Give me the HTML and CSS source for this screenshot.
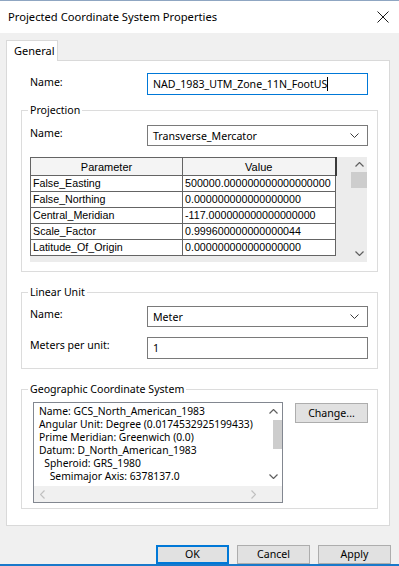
FILE: index.html
```html
<!DOCTYPE html>
<html>
<head>
<meta charset="utf-8">
<title>Projected Coordinate System Properties</title>
<link rel="stylesheet" href="styles.css">
</head>
<body>
<div class="window">
  <div class="titlebar">
    <span class="title">Projected Coordinate System Properties</span>
    <svg class="close" width="12" height="12" viewBox="0 0 12 12"><path d="M0.5 0.5L11.5 11.5M11.5 0.5L0.5 11.5" stroke="#1a1a1a" stroke-width="1"/></svg>
  </div>
  <div class="main">
    <div class="tabs"><div class="tab">General</div></div>
    <div class="panel">
      <div class="row toprow">
        <span class="lbl">Name:</span>
        <div class="textbox focused">NAD_1983_UTM_Zone_11N_FootUS<span class="caret"></span></div>
      </div>

      <fieldset class="group g-proj">
        <legend>Projection</legend>
        <div class="row">
          <span class="lbl">Name:</span>
          <div class="combo"><span>Transverse_Mercator</span><svg class="chev" width="9" height="5" viewBox="0 0 9 5"><path d="M0.5 0.5L4.5 4.5L8.5 0.5" fill="none" stroke="#3c3c3c" stroke-width="1"/></svg></div>
        </div>
        <div class="grid">
          <table class="params">
            <colgroup><col class="c1"><col class="c2"></colgroup>
            <thead><tr><th>Parameter</th><th class="last">Value</th></tr></thead>
            <tbody>
              <tr><td>False_Easting</td><td>500000.000000000000000000</td></tr>
              <tr><td>False_Northing</td><td>0.000000000000000000</td></tr>
              <tr><td>Central_Meridian</td><td>-117.000000000000000000</td></tr>
              <tr><td>Scale_Factor</td><td>0.999600000000000044</td></tr>
              <tr><td>Latitude_Of_Origin</td><td>0.000000000000000000</td></tr>
            </tbody>
          </table>
          <div class="vscroll">
            <div class="arrow up"><svg width="9" height="5" viewBox="0 0 9 5"><path d="M0.5 4.5L4.5 0.5L8.5 4.5" fill="none" stroke="#606060" stroke-width="1.2"/></svg></div>
            <div class="thumb"></div>
            <div class="track"></div>
            <div class="arrow down"><svg width="9" height="5" viewBox="0 0 9 5"><path d="M0.5 0.5L4.5 4.5L8.5 0.5" fill="none" stroke="#606060" stroke-width="1.2"/></svg></div>
          </div>
        </div>
      </fieldset>

      <fieldset class="group g-unit">
        <legend>Linear Unit</legend>
        <div class="row">
          <span class="lbl">Name:</span>
          <div class="combo"><span>Meter</span><svg class="chev" width="9" height="5" viewBox="0 0 9 5"><path d="M0.5 0.5L4.5 4.5L8.5 0.5" fill="none" stroke="#3c3c3c" stroke-width="1"/></svg></div>
        </div>
        <div class="row mpu">
          <span class="lbl">Meters per unit:</span>
          <div class="textbox">1</div>
        </div>
      </fieldset>

      <fieldset class="group g-gcs">
        <legend>Geographic Coordinate System</legend>
        <div class="gcs-row">
          <div class="listbox">
            <div class="list-text">Name: GCS_North_American_1983
Angular Unit: Degree (0.0174532925199433)
Prime Meridian: Greenwich (0.0)
Datum: D_North_American_1983
  Spheroid: GRS_1980
    Semimajor Axis: 6378137.0</div>
            <div class="lvscroll">
              <div class="arrow up"><svg width="9" height="5" viewBox="0 0 9 5"><path d="M0.5 4.5L4.5 0.5L8.5 4.5" fill="none" stroke="#606060" stroke-width="1.2"/></svg></div>
              <div class="thumb"></div>
              <div class="track"></div>
              <div class="arrow down"><svg width="9" height="5" viewBox="0 0 9 5"><path d="M0.5 0.5L4.5 4.5L8.5 0.5" fill="none" stroke="#606060" stroke-width="1.2"/></svg></div>
            </div>
            <div class="hscroll">
              <svg width="5" height="9" viewBox="0 0 5 9"><path d="M4.5 0.5L0.5 4.5L4.5 8.5" fill="none" stroke="#c0c0c0" stroke-width="1.2"/></svg>
              <svg width="5" height="9" viewBox="0 0 5 9"><path d="M0.5 0.5L4.5 4.5L0.5 8.5" fill="none" stroke="#c0c0c0" stroke-width="1.2"/></svg>
            </div>
            <div class="corner"></div>
          </div>
          <div class="btn change">Change...</div>
        </div>
      </fieldset>
    </div>
    <div class="footer">
      <div class="btn default">OK</div>
      <div class="btn">Cancel</div>
      <div class="btn">Apply</div>
    </div>
  </div>
  <div class="bluebar"></div>
</div>
</body>
</html>
```
FILE: styles.css
```css
* { box-sizing: border-box; }
html, body { margin: 0; padding: 0; }
body {
  width: 399px;
  height: 566px;
  overflow: hidden;
  background: #f0f0f0;
  font-family: "Noto Sans", sans-serif;
  font-size: 10.6px;
  color: #000;
}
.window { display: flex; flex-direction: column; height: 566px; }

.titlebar {
  height: 33px;
  flex: none;
  background: #fff;
  border-top: 1px solid #8fa6c2;
  display: flex;
  align-items: center;
  justify-content: space-between;
  padding: 0 10px 0 8px;
}
.title { font-size: 11.2px; line-height: 16px; }

.main { flex: 1; display: flex; flex-direction: column; padding: 7px 0 0 6px; }
.tabs { display: flex; }
.tab {
  width: 52px;
  height: 21px;
  background: #fff;
  border: 1px solid #d9d9d9;
  border-bottom: none;
  padding-left: 7px;
  line-height: 19px;
  font-size: 11px;
  position: relative;
  z-index: 1;
  margin-bottom: -1px;
}
.panel {
  width: 384px;
  height: 466px;
  background: #fff;
  border: 1px solid #d9d9d9;
  padding-top: 12px;
}

.row { display: flex; align-items: flex-start; }
.toprow { padding-left: 23px; }
.lbl { width: 117px; flex: none; line-height: 16px; padding-top: 0; }
.toprow .lbl { padding-top: 1px; }

.textbox {
  width: 221px;
  height: 22px;
  border: 1px solid #7a7a7a;
  background: #fff;
  padding-left: 5px;
  line-height: 20px;
  white-space: nowrap;
  display: flex;
  align-items: center;
}
.textbox.focused { border-color: #0078d7; }
.caret { display: inline-block; width: 1px; height: 14px; background: #000; margin-left: 0; }

.combo {
  width: 221px;
  height: 21px;
  border: 1px solid #7a7a7a;
  background: #fff;
  padding: 0 8px 0 5px;
  display: flex;
  align-items: center;
  justify-content: space-between;
}

.group {
  margin: 7px 0 0 14px;
  width: 357px;
  padding: 7px 8px 9px 8px;
  border: 1px solid #dcdcdc;
  min-inline-size: 0;
}
.group legend {
  padding: 0 2px;
  margin-left: -2px;
  line-height: 16px;
}
.g-unit { margin-top: 12px; padding-top: 6px; }
.g-gcs { margin-top: 12px; padding-top: 5px; padding-bottom: 5px; }
.mpu { margin-top: 10px; }

.grid {
  margin-top: 11px;
  width: 337px;
  height: 105px;
  background: #ececec;
  display: flex;
  justify-content: space-between;
}
.params {
  border-collapse: collapse;
  table-layout: fixed;
  width: 305px;
  font-family: "Liberation Sans", Arial, sans-serif;
  font-size: 10.7px;
  align-self: flex-start;
}
.params .c1 { width: 152px; }
.params .c2 { width: 153px; }
.params th {
  height: 18px;
  font-weight: normal;
  font-size: 11px;
  background: #f4f4f4;
  border: 1px solid #646464;
  padding: 0;
  text-align: center;
  line-height: 16px;
}
.params th.last { border-right: 2px solid #3a3a3a; }
.params td {
  height: 16px;
  background: #fff;
  border: 1px solid #646464;
  padding: 0 0 0 2px;
  line-height: 15px;
  white-space: nowrap;
  overflow: hidden;
}

.vscroll {
  width: 16px;
  display: flex;
  flex-direction: column;
}
.arrow { display: flex; align-items: center; justify-content: center; flex: none; }
.vscroll .up { height: 15px; }
.vscroll .thumb { height: 16px; background: #cdcdcd; flex: none; }
.vscroll .track { flex: 1; }
.vscroll .down { height: 18px; }

.gcs-row { display: flex; align-items: flex-start; padding-left: 3px; }
.listbox {
  width: 250px;
  height: 101px;
  border: 1px solid #828790;
  background: #fff;
  display: grid;
  grid-template-columns: 1fr 17px;
  grid-template-rows: 1fr 16px;
}
.list-text {
  white-space: pre;
  overflow: hidden;
  font-size: 10.3px;
  line-height: 13px;
  padding: 2px 0 0 5px;
}
.lvscroll { display: flex; flex-direction: column; background: #fff; }
.lvscroll .up { height: 17px; }
.lvscroll .thumb { height: 29px; background: #cdcdcd; margin-left: 8px; flex: none; }
.lvscroll .track { flex: 1; }
.lvscroll .down { height: 20px; }
.hscroll {
  background: #f0f0f0;
  display: flex;
  align-items: center;
  justify-content: space-between;
  padding: 0 9px 0 6px;
}
.corner { background: #f0f0f0; }

.btn {
  width: 73px;
  height: 19px;
  background: #e1e1e1;
  border: 1px solid #adadad;
  text-align: center;
  line-height: 17px;
  flex: none;
}
.btn.default { border: 2px solid #0078d7; line-height: 15px; }
.change { margin-left: 12px; margin-top: 1px; height: 20px; line-height: 18px; }

.footer {
  margin-top: 19px;
  display: flex;
  justify-content: flex-end;
  gap: 8px;
  padding-right: 8px;
}
.bluebar { height: 2px; background: #1979ca; flex: none; }
```
